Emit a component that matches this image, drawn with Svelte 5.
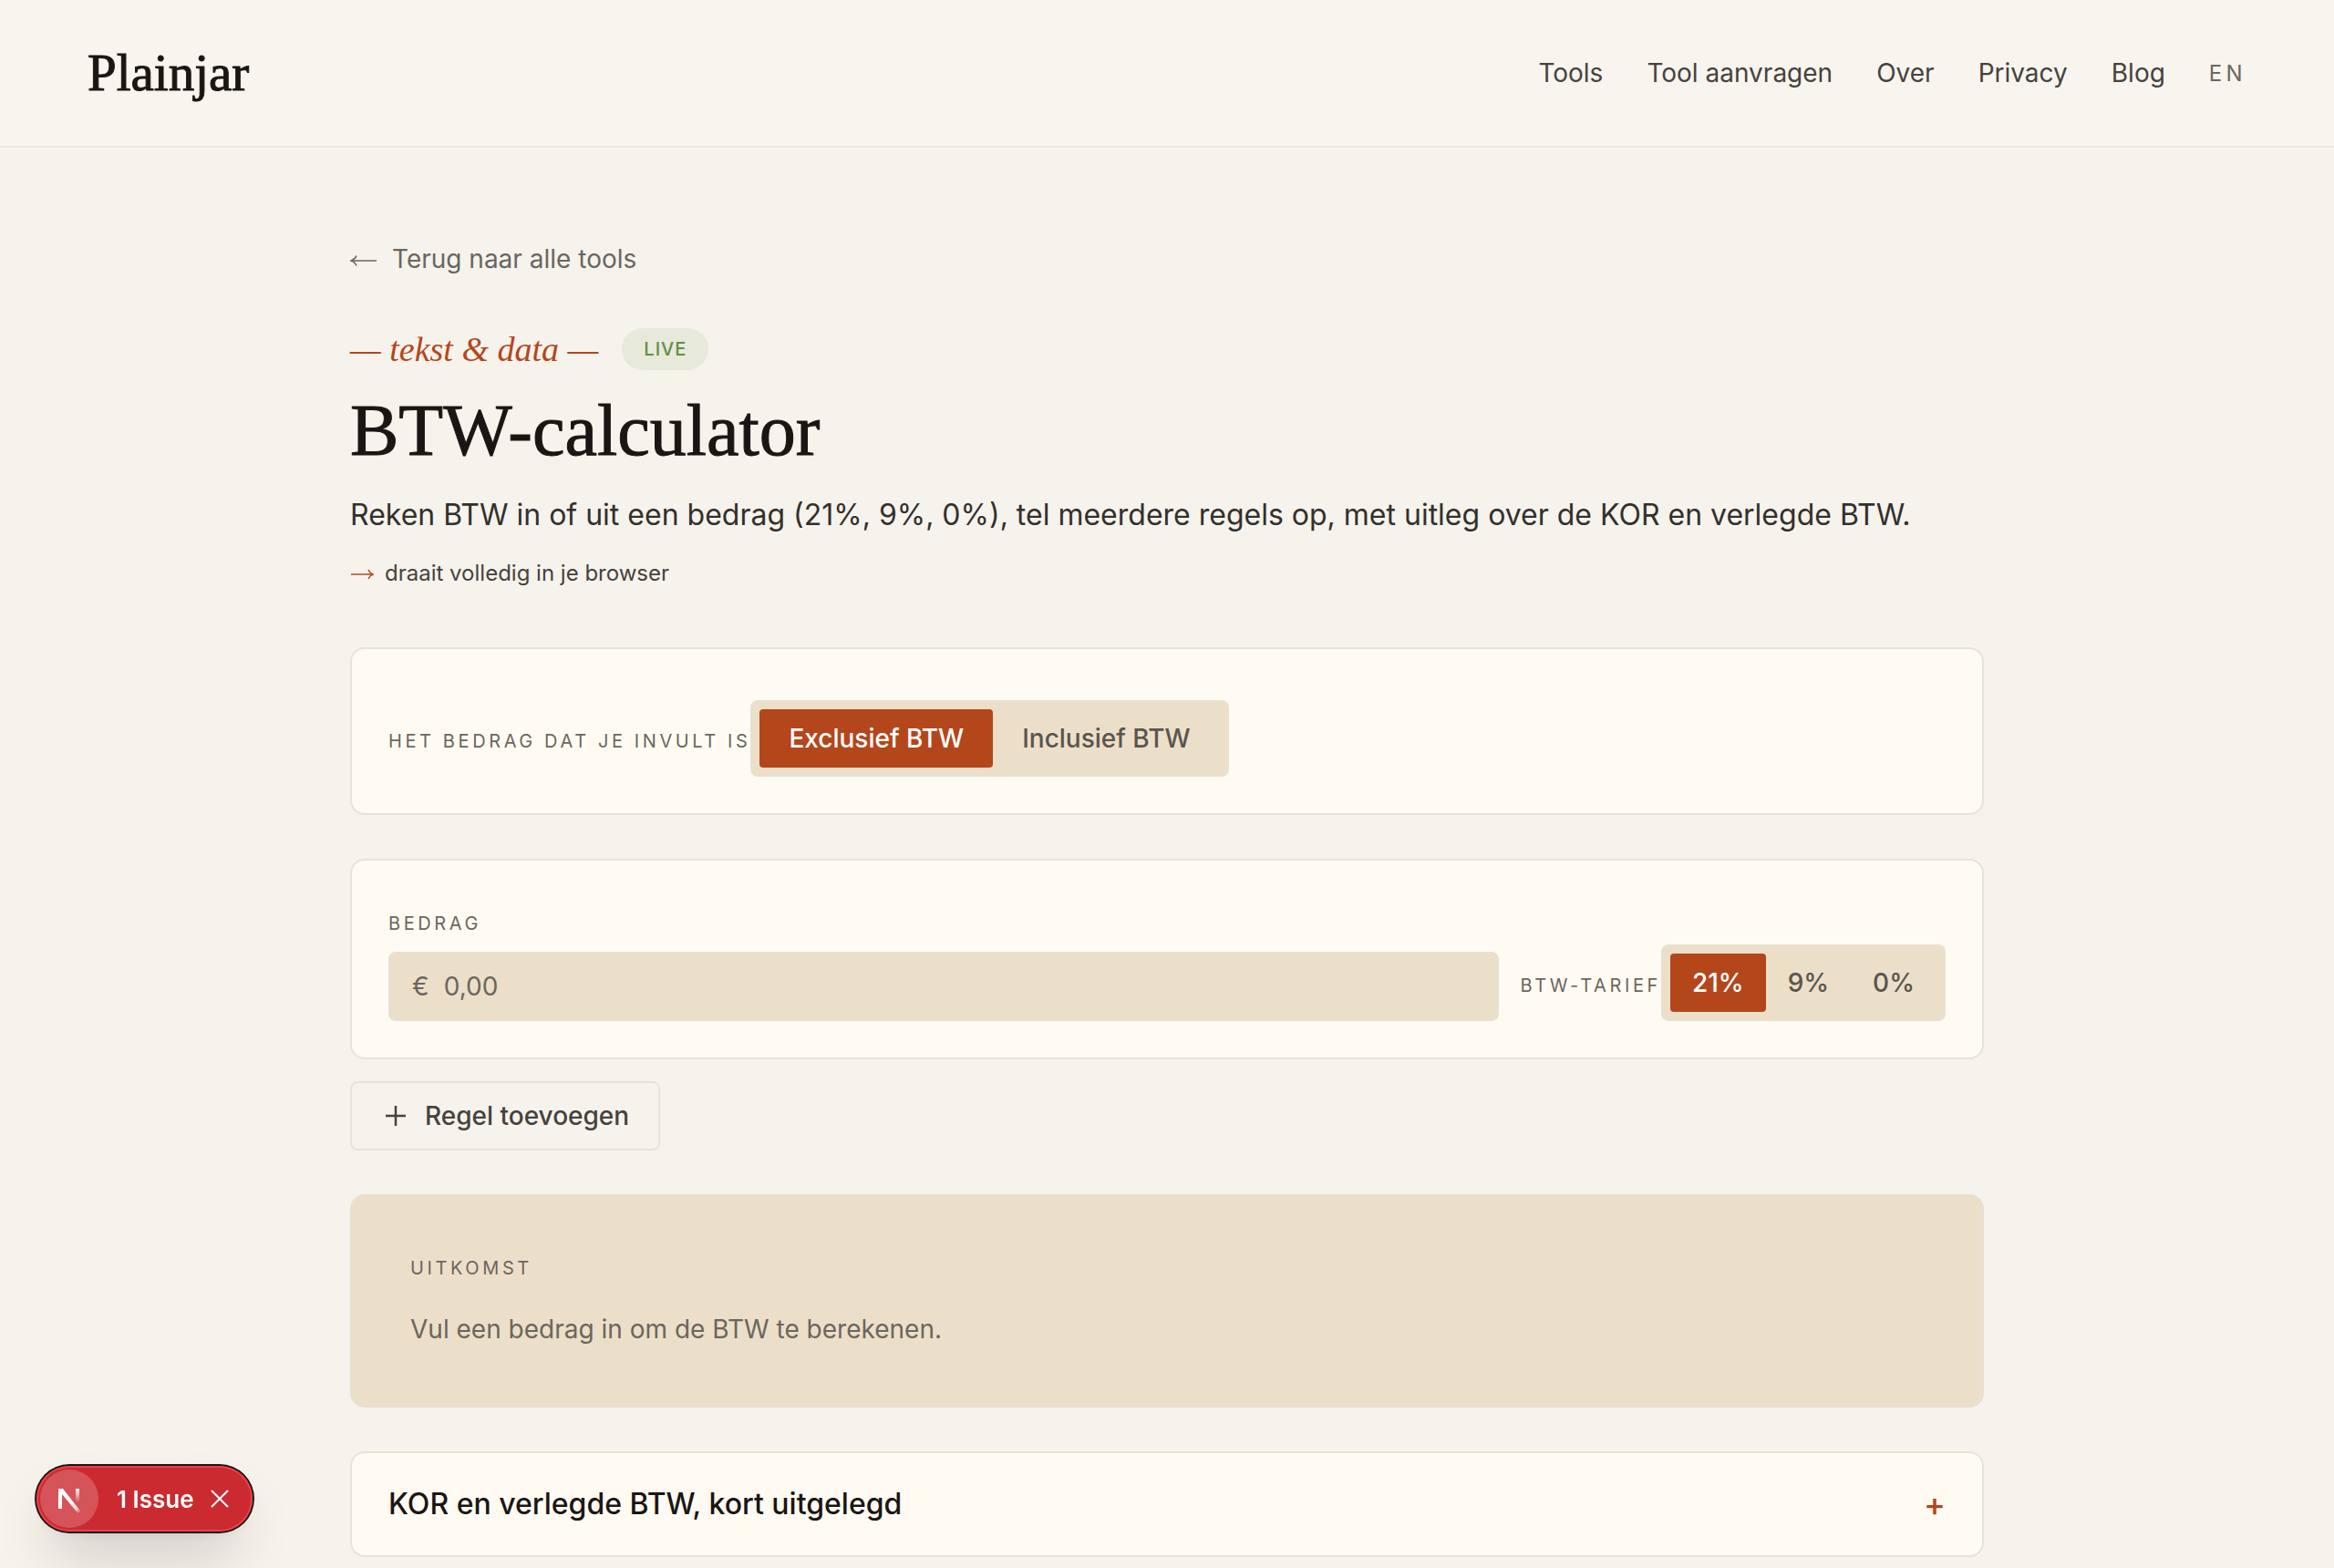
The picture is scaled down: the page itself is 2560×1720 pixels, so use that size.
<script lang="ts">
  // Page: BTW-calculator. Header, intro, amount rows, result and explainer.

  const links = ['Tools', 'Tool aanvragen', 'Over', 'Privacy', 'Blog']
  const modes = [
    { id: 'excl', label: 'Exclusief BTW' },
    { id: 'incl', label: 'Inclusief BTW' },
  ]
  const rates = [21, 9, 0]

  let mode = $state('excl')
  let rows = $state([{ amount: '', rate: 21 }])
  let showIssue = $state(true)

  const money = new Intl.NumberFormat('nl-NL', { style: 'currency', currency: 'EUR' })

  const parse = (value: string) => Number(value.replace(/\./g, '').replace(',', '.')) || 0

  const vat = $derived(
    rows.reduce((sum, row) => {
      const amount = parse(row.amount)
      return sum + (mode === 'excl' ? (amount * row.rate) / 100 : amount - amount / (1 + row.rate / 100))
    }, 0)
  )
  const filled = $derived(rows.some((row) => parse(row.amount) > 0))

  function addRow() {
    rows.push({ amount: '', rate: 21 })
  }
</script>

<header class="site-header">
  <a class="logo" href="#home">Plainjar</a>
  <nav>
    {#each links as link}
      <a href="#{link}">{link}</a>
    {/each}
    <a class="lang" href="#en">EN</a>
  </nav>
</header>

<main>
  <a class="back" href="#tools">
    <svg width="30" height="18" viewBox="0 0 30 18" fill="none" stroke="currentColor" aria-hidden="true">
      <path d="M1 11H29" stroke-width="1.5" />
      <path d="M7 5.500C6 8 4 10 1 11C4 12 6 14 7 16.500" stroke-width="1.5" />
    </svg>
    Terug naar alle tools
  </a>

  <div class="eyebrow">
    <span class="category">— tekst &amp; data —</span>
    <span class="badge">LIVE</span>
  </div>
  <h1>BTW-calculator</h1>
  <p class="lead">
    Reken BTW in of uit een bedrag (21%, 9%, 0%), tel meerdere regels op, met uitleg over de KOR en verlegde BTW.
  </p>
  <p class="note">
    <svg width="26" height="14" viewBox="0 0 26 14" fill="none" stroke="currentColor" aria-hidden="true">
      <path d="M1 8H25" stroke-width="1.5" />
      <path d="M20 3C21 5.500 22.500 7 25 8C22.500 9 21 10.500 20 13" stroke-width="1.5" />
    </svg>
    draait volledig in je browser
  </p>

  <section class="card mode">
    <span class="label" id="mode-label">Het bedrag dat je invult is</span>
    <div class="toggle" role="group" aria-labelledby="mode-label">
      {#each modes as item}
        <button
          type="button"
          class="wide"
          class:active={mode === item.id}
          aria-pressed={mode === item.id}
          onclick={() => (mode = item.id)}
        >{item.label}</button>
      {/each}
    </div>
  </section>

  {#each rows as row, i}
    <section class="card row">
      <div class="field">
        <label class="label" for="amount-{i}">Bedrag</label>
        <div class="input">
          <span>€</span>
          <input id="amount-{i}" type="text" inputmode="decimal" placeholder="0,00" bind:value={row.amount} />
        </div>
      </div>
      <div class="rate">
        <span class="label" id="rate-{i}">BTW-tarief</span>
        <div class="toggle" role="group" aria-labelledby="rate-{i}">
          {#each rates as rate}
            <button
              type="button"
              class:active={row.rate === rate}
              aria-pressed={row.rate === rate}
              onclick={() => (row.rate = rate)}
            >{rate}%</button>
          {/each}
        </div>
      </div>
    </section>
  {/each}

  <button type="button" class="add" onclick={addRow}>
    <svg width="24" height="24" viewBox="0 0 24 24" stroke="currentColor" stroke-width="2.5" aria-hidden="true">
      <path d="M12 1V23M1 12H23" />
    </svg>
    Regel toevoegen
  </button>

  <section class="result" aria-live="polite">
    <h2 class="label">Uitkomst</h2>
    {#if filled}
      <p>BTW: {money.format(vat)}</p>
    {:else}
      <p>Vul een bedrag in om de BTW te berekenen.</p>
    {/if}
  </section>

  <details class="card explainer">
    <summary>
      KOR en verlegde BTW, kort uitgelegd
      <span class="plus" aria-hidden="true">+</span>
    </summary>
  </details>
</main>

{#if showIssue}
  <div class="issue">
    <button type="button" class="mark" aria-label="Open Next.js Dev Tools">
      <svg width="40" height="40" viewBox="0 0 40 40" fill="none" aria-hidden="true">
        <defs>
          <linearGradient id="diagonal" x1="22" y1="22" x2="32" y2="36" gradientUnits="userSpaceOnUse">
            <stop stop-color="#fff" />
            <stop offset="0.600" stop-color="#fff" stop-opacity="0.800" />
            <stop offset="1" stop-color="#fff" stop-opacity="0" />
          </linearGradient>
          <linearGradient id="stem" x1="29" y1="9" x2="29" y2="24" gradientUnits="userSpaceOnUse">
            <stop stop-color="#fff" />
            <stop offset="1" stop-color="#fff" stop-opacity="0" />
          </linearGradient>
        </defs>
        <path d="M8 9V31H12V15L29.500 36L32.500 34L13 9Z" fill="url(#diagonal)" />
        <path d="M27 9H31V24H27Z" fill="url(#stem)" />
      </svg>
    </button>
    <button type="button" class="count">1 Issue</button>
    <button type="button" class="close" aria-label="Sluiten" onclick={() => (showIssue = false)}>
      <svg width="20" height="20" viewBox="0 0 20 20" stroke="currentColor" stroke-width="2" aria-hidden="true">
        <path d="M1 1L19 19M19 1L1 19" />
      </svg>
    </button>
  </div>
{/if}

<style>
  :global(body) {
    margin: 0;
    background: #f6f3ec;
    color: #1a1614;
    font-family: Inter, sans-serif;
    font-size: 28px;
  }

  :global(*) {
    box-sizing: border-box;
  }

  a {
    color: inherit;
    text-decoration: none;
  }

  button,
  input {
    font: inherit;
    color: inherit;
    border: 0;
    background: none;
    padding: 0;
  }

  button {
    cursor: pointer;
  }

  .site-header {
    display: flex;
    align-items: center;
    justify-content: space-between;
    height: 162px;
    padding: 0 96px;
    background: #f8f5ee;
    border-bottom: 2px solid #eeeade;
  }

  .logo {
    font-family: 'Liberation Serif', serif;
    font-size: 57px;
    line-height: 64px;
    -webkit-text-stroke: 1px currentColor;
  }

  nav {
    display: flex;
    align-items: center;
    gap: 48px;
    color: #46423d;
  }

  .lang {
    color: #6b665e;
    font-size: 24px;
    letter-spacing: 0.18em;
  }

  main {
    max-width: 1792px;
    margin: 0 auto;
    padding: 96px 0 12px;
  }

  .back {
    display: flex;
    align-items: center;
    gap: 16px;
    width: fit-content;
    line-height: 52px;
    color: #6b665e;
  }

  .eyebrow {
    display: flex;
    align-items: center;
    gap: 26px;
    margin-top: 48px;
    line-height: 50px;
  }

  .category {
    font-family: 'Liberation Serif', serif;
    font-size: 38px;
    font-style: italic;
    color: #b4461b;
  }

  .badge {
    padding: 0 24px;
    border-radius: 24px;
    background: #e7e9db;
    color: #5f8f45;
    font-size: 20px;
    font-weight: 500;
    line-height: 46px;
    letter-spacing: 1px;
  }

  h1 {
    margin: 24px 0 0;
    font-family: 'Liberation Serif', serif;
    font-size: 80px;
    font-weight: 400;
    line-height: 80px;
    -webkit-text-stroke: 1px currentColor;
  }

  .lead {
    margin: 24px 0 0;
    font-size: 32px;
    line-height: 58px;
    color: #33302c;
  }

  .note {
    display: flex;
    align-items: center;
    gap: 12px;
    margin: 14px 0 60px;
    font-size: 24px;
    line-height: 42px;
    color: #46423d;
  }

  .note svg {
    color: #b4461b;
  }

  .card {
    border: 2px solid #e8e3d6;
    border-radius: 16px;
    background: #fffbf3;
    padding: 56px 40px 40px;
  }

  .label {
    margin: 0;
    color: #6b665e;
    font-size: 20px;
    font-weight: 400;
    line-height: 26px;
    letter-spacing: 0.18em;
    text-transform: uppercase;
  }

  .mode,
  .rate {
    display: flex;
    align-items: baseline;
  }

  .toggle {
    display: flex;
    padding: 8px;
    border: 2px solid #e8e0d0;
    border-radius: 8px;
    background: #ecdfc9;
  }

  .toggle button {
    padding: 0 24px;
    border-radius: 4px;
    color: #5a554e;
    font-weight: 500;
    line-height: 64px;
  }

  .toggle .wide {
    padding: 0 32px;
  }

  .toggle .active {
    background: #b4461b;
    color: #fff;
  }

  .row {
    display: flex;
    align-items: flex-end;
    gap: 24px;
    margin-top: 48px;
  }

  .row + .row {
    margin-top: 24px;
  }

  .field {
    display: flex;
    flex: 1;
    flex-direction: column;
    gap: 18px;
  }

  .input {
    display: flex;
    align-items: center;
    gap: 16px;
    height: 76px;
    padding: 0 24px;
    border: 2px solid #e8e0d0;
    border-radius: 8px;
    background: #ecdfc9;
    color: #6b665e;
  }

  .input input {
    flex: 1;
    min-width: 0;
    outline: none;
  }

  .input input::placeholder {
    color: #6b665e;
    opacity: 1;
  }

  .add {
    display: flex;
    align-items: center;
    gap: 20px;
    margin-top: 24px;
    padding: 0 32px 0 36px;
    border: 2px solid #e8e3d6;
    border-radius: 8px;
    color: #46423d;
    font-weight: 500;
    line-height: 72px;
  }

  .result {
    margin: 48px 0;
    padding: 60px 64px;
    border: 2px solid #e8e0d0;
    border-radius: 16px;
    background: #ecdfc9;
    color: #6b665e;
  }

  .result .label {
    line-height: 38px;
  }

  .result p {
    margin: 24px 0 0;
    line-height: 48px;
  }

  .explainer {
    padding: 32px 40px;
  }

  summary {
    display: flex;
    align-items: center;
    justify-content: space-between;
    list-style: none;
    font-size: 32px;
    font-weight: 500;
    line-height: 48px;
    cursor: pointer;
  }

  .plus {
    font-size: 36px;
    color: #b4461b;
  }

  .issue {
    position: fixed;
    left: 40px;
    bottom: 40px;
    display: flex;
    align-items: center;
    height: 72px;
    padding: 0 26px 0 4px;
    border-radius: 36px;
    background: #ca2a30;
    color: #fff;
    box-shadow:
      0 0 0 2px #171717,
      inset 0 0 0 2px #ec3f49,
      0 32px 64px -16px rgba(0, 0, 0, 0.24),
      0 8px 16px -8px rgba(0, 0, 0, 0.1);
  }

  .mark {
    display: grid;
    place-items: center;
    width: 64px;
    height: 64px;
    border-radius: 50%;
    background: rgba(255, 255, 255, 0.2);
  }

  .count {
    margin: 0 18px 0 20px;
    font-size: 26px;
    font-weight: 600;
  }

  .close {
    display: grid;
  }
</style>
